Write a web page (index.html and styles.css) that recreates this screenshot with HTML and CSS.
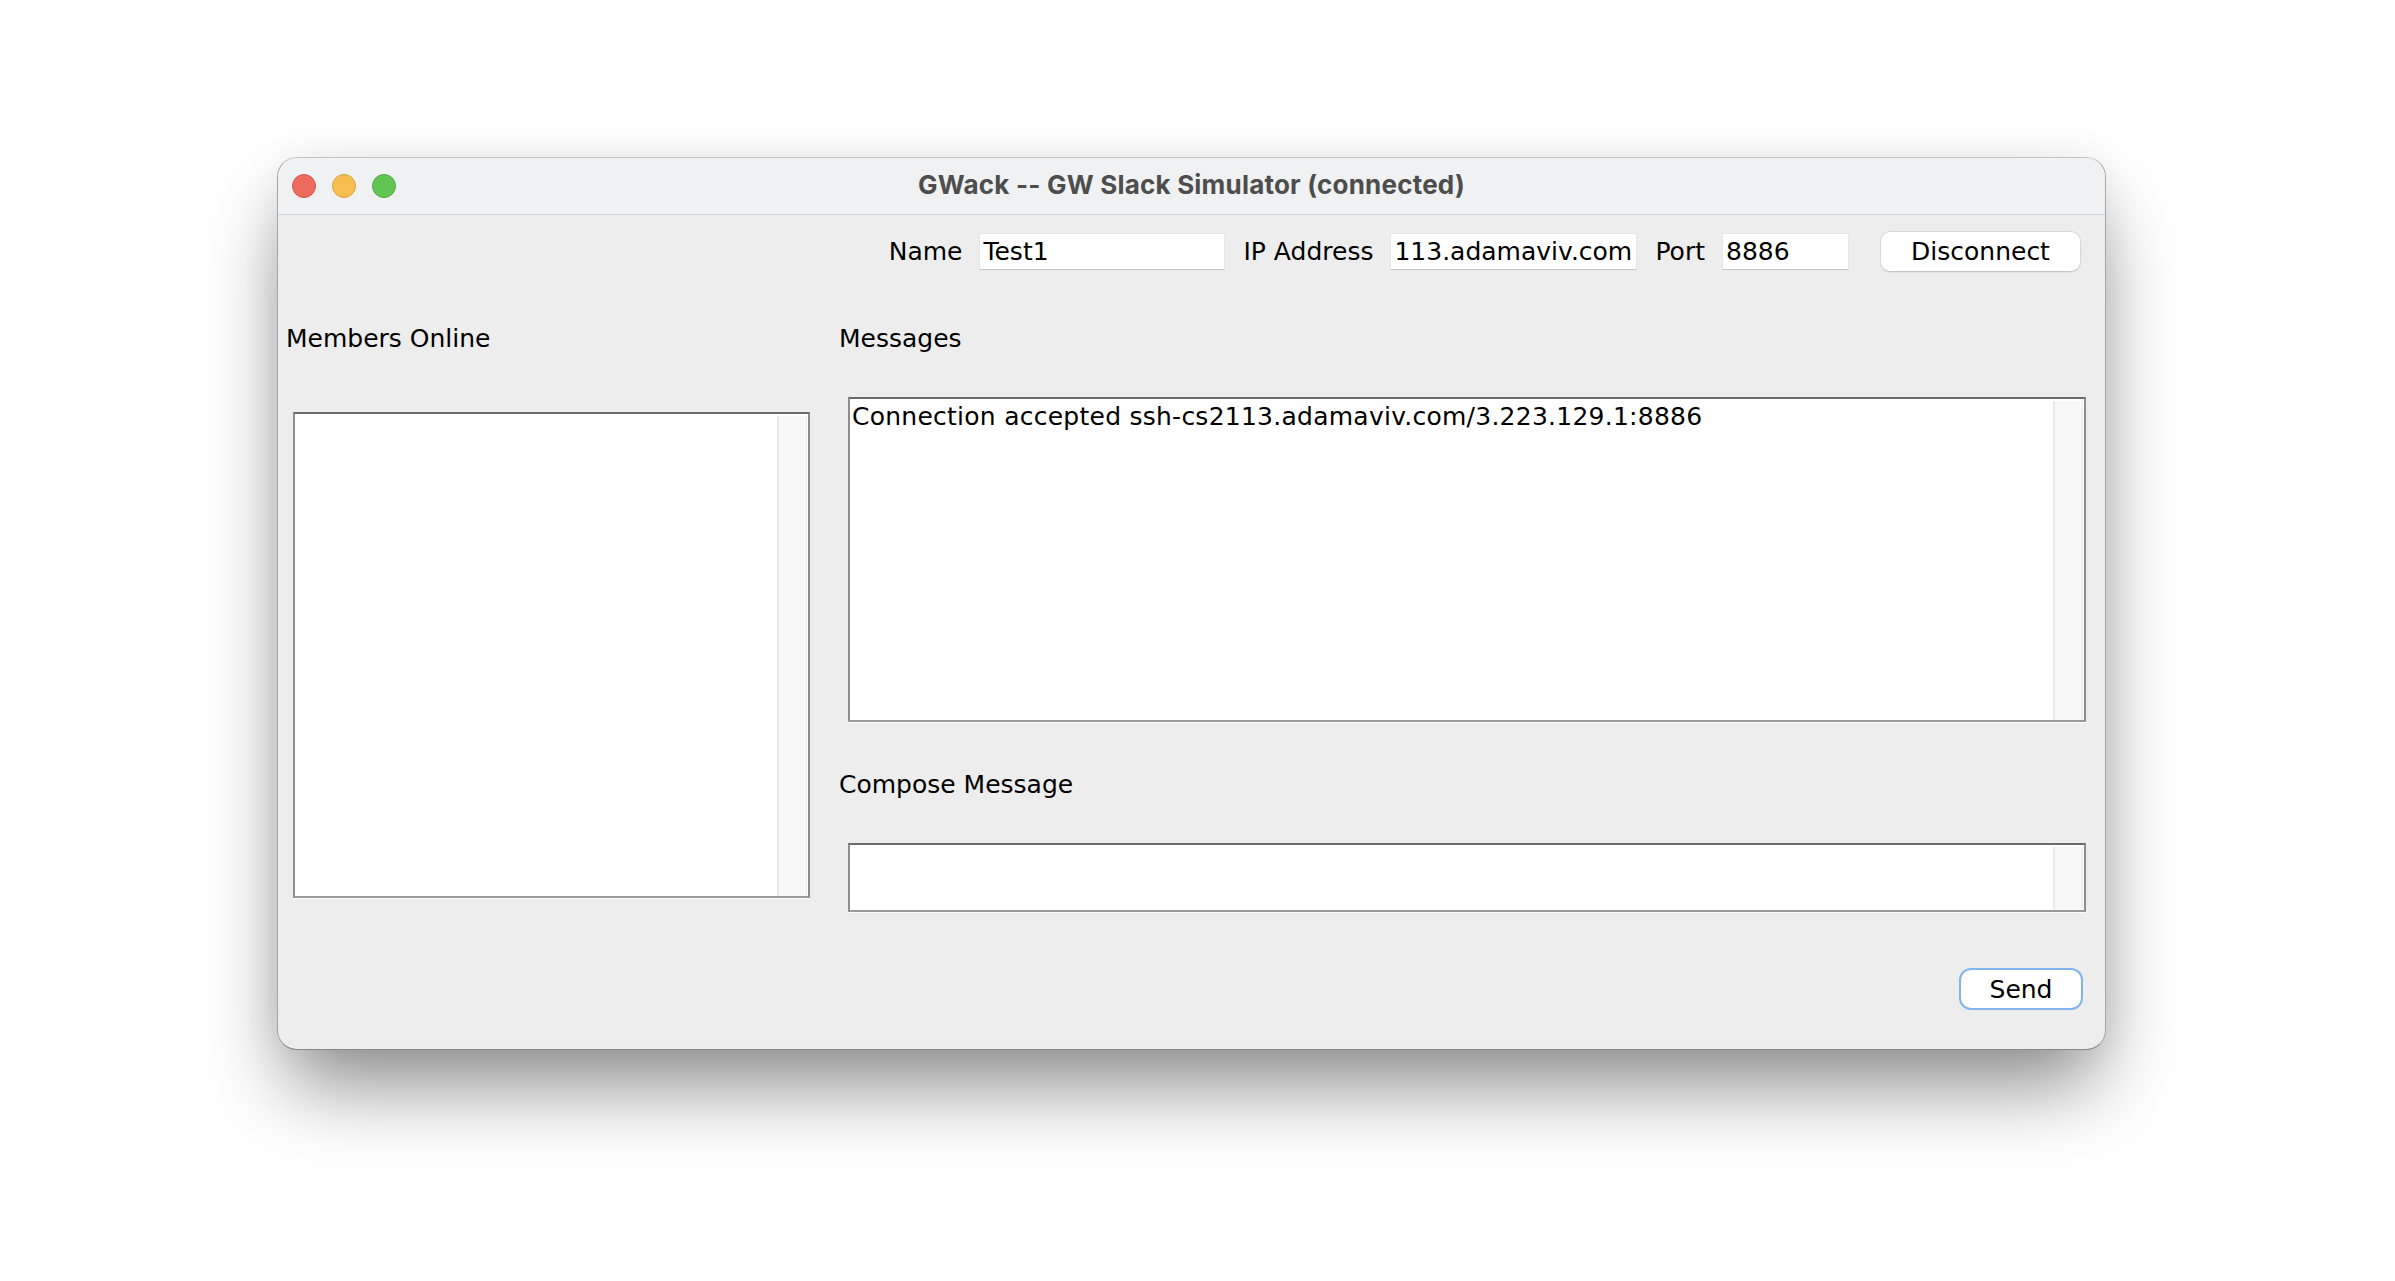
FILE: index.html
```html
<!DOCTYPE html>
<html>
<head>
<meta charset="utf-8">
<title>GWack</title>
<link rel="stylesheet" href="styles.css">
</head>
<body>
<div class="stage">
  <div class="window">
    <div class="titlebar">
      <div class="lights">
        <span class="light red"></span>
        <span class="light yellow"></span>
        <span class="light green"></span>
      </div>
      <div class="title">GWack -- GW Slack Simulator (connected)</div>
      <div class="titlebar-spacer"></div>
    </div>
    <div class="content">
      <div class="connect-row">
        <span class="field-label">Name</span>
        <div class="field field-name">Test1</div>
        <span class="field-label">IP Address</span>
        <div class="field field-ip">113.adamaviv.com</div>
        <span class="field-label">Port</span>
        <div class="field field-port">8886</div>
        <button class="btn btn-disconnect">Disconnect</button>
      </div>
      <div class="main">
        <div class="members-col">
          <div class="section-label">Members Online</div>
          <div class="box members-box">
            <div class="box-text"></div>
            <div class="scroll-track"></div>
          </div>
        </div>
        <div class="chat-col">
          <div class="section-label">Messages</div>
          <div class="box messages-box">
            <div class="box-text message-text">Connection accepted ssh-cs2113.adamaviv.com/3.223.129.1:8886</div>
            <div class="scroll-track"></div>
          </div>
          <div class="section-label compose-label">Compose Message</div>
          <div class="box compose-box">
            <div class="box-text"></div>
            <div class="scroll-track"></div>
          </div>
          <div class="send-row">
            <button class="btn btn-send">Send</button>
          </div>
        </div>
      </div>
    </div>
  </div>
</div>
</body>
</html>
```

FILE: styles.css
```css
html, body {
  margin: 0;
  background: #ffffff;
}

body {
  font-family: "DejaVu Sans", "Liberation Sans", sans-serif;
  color: #000;
  min-height: 1281px;
}

.stage {
  padding: 157px 0 0 277px;
}

.window {
  width: 1829px;
  height: 893px;
  box-sizing: border-box;
  border: 1px solid;
  border-color: #c4c4c4 #a6a6a6 #8a8a8a #a6a6a6;
  border-radius: 20px;
  background: #ededed;
  overflow: hidden;
  display: flex;
  flex-direction: column;
  box-shadow: 0 45px 80px -10px rgba(0, 0, 0, 0.45), 0 0 40px rgba(0, 0, 0, 0.06);
}

.titlebar {
  height: 56px;
  flex: none;
  background: #eff1f2;
  border-bottom: 1px solid #d2d2d2;
  display: grid;
  grid-template-columns: 1fr auto 1fr;
  align-items: center;
}

.lights {
  display: flex;
  gap: 16px;
  padding-left: 14px;
}

.light {
  width: 24px;
  height: 24px;
  border-radius: 50%;
  box-sizing: border-box;
  border: 1px solid;
}

.light.red { background: #ee6a5f; border-color: #d5564b; }
.light.yellow { background: #f6be4f; border-color: #d9a142; }
.light.green { background: #61c554; border-color: #4faa42; }

.title {
  font-family: "Inter", "Liberation Sans", sans-serif;
  font-weight: 700;
  font-size: 26px;
  letter-spacing: 0.2px;
  color: #4d4d4d;
  line-height: 30px;
  padding-bottom: 3px;
}

.content {
  flex: 1;
  display: flex;
  flex-direction: column;
  padding: 16px 19px 0 8px;
}

.connect-row {
  display: flex;
  justify-content: flex-end;
  align-items: center;
  height: 41px;
  padding-right: 5px;
}

.field-label {
  font-size: 25px;
  margin-right: 17px;
}

.field {
  height: 37px;
  box-sizing: border-box;
  background: #ffffff;
  border: 1px solid #e6e6e6;
  border-bottom-color: #c4c4c4;
  padding: 0 3px;
  font-size: 25px;
  line-height: 35px;
  margin-right: 18px;
  white-space: nowrap;
  overflow: hidden;
}

.field-name { width: 246px; }
.field-ip { width: 247px; }
.field-port { width: 127px; margin-right: 31px; }

.btn {
  font-family: "DejaVu Sans", "Liberation Sans", sans-serif;
  font-size: 25px;
  color: #000;
  background: #ffffff;
  box-sizing: border-box;
  padding: 0;
  cursor: default;
}

.btn-disconnect {
  width: 201px;
  height: 41px;
  border: 1px solid #d8d8d8;
  border-bottom-color: #c6c6c6;
  border-radius: 10px;
  box-shadow: 0 1px 1px rgba(0, 0, 0, 0.06);
}

.main {
  flex: 1;
  display: flex;
  margin-top: 52px;
}

.members-col {
  width: 553px;
  flex: none;
  display: flex;
  flex-direction: column;
}

.chat-col {
  flex: 1;
  display: flex;
  flex-direction: column;
}

.section-label {
  font-size: 25px;
  line-height: 30px;
  height: 30px;
  white-space: nowrap;
}

.box {
  box-sizing: border-box;
  background: #ffffff;
  border-style: solid;
  border-width: 2px;
  border-color: #6a6a6a #8d8d8d #999999 #8d8d8d;
  box-shadow: 0 1px 0 #ffffff;
  display: flex;
}

.box-text {
  flex: 1;
  font-size: 25px;
  line-height: 30px;
  padding: 3px 0 0 2px;
  white-space: nowrap;
  overflow: hidden;
}

.message-text {
  letter-spacing: 0.25px;
}

.scroll-track {
  width: 30px;
  flex: none;
  margin: 2px 1px 0 0;
  box-sizing: border-box;
  background: #f8f8f8;
  border-left: 2px solid #e9e9e9;
  border-right: 1px solid #ececec;
}

.members-box {
  margin: 58px 0 0 7px;
  width: 517px;
  height: 486px;
}

.messages-box {
  margin: 43px 0 0 9px;
  height: 325px;
}

.compose-label {
  margin-top: 48px;
}

.compose-box {
  margin: 43px 0 0 9px;
  height: 69px;
}

.send-row {
  display: flex;
  justify-content: flex-end;
  margin-top: 56px;
  padding-right: 3px;
}

.btn-send {
  width: 124px;
  height: 42px;
  border: 2px solid #80b4ef;
  border-radius: 12px;
}
```
